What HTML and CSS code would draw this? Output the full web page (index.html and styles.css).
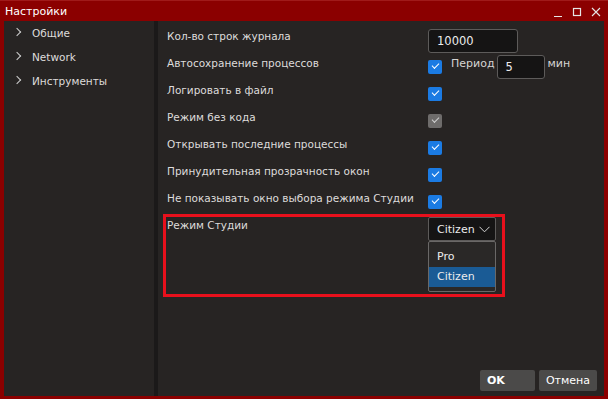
FILE: index.html
```html
<!DOCTYPE html>
<html lang="ru">
<head>
  <meta charset="UTF-8">
  <title>Настройки</title>
  <link rel="stylesheet" href="styles.css">
</head>
<body>
<div class="window">
  <div class="titlebar">
    <span class="title">Настройки</span>
    <div class="title-buttons">
      <svg width="10" height="10" viewBox="0 0 10 10"><path d="M1 9.5H9" stroke="#e6e6e6" stroke-width="1"/></svg>
      <svg width="10" height="10" viewBox="0 0 10 10"><rect x="1.5" y="1.5" width="7" height="7" fill="none" stroke="#e6e6e6" stroke-width="1.2"/></svg>
      <svg width="10" height="10" viewBox="0 0 10 10"><path d="M1 1L9 9M9 1L1 9" stroke="#e6e6e6" stroke-width="1.1"/></svg>
    </div>
  </div>

  <div class="content">
    <div class="sidebar">
      <div class="nav-item"><span class="chevron"></span>Общие</div>
      <div class="nav-item"><span class="chevron"></span>Network</div>
      <div class="nav-item"><span class="chevron"></span>Инструменты</div>
    </div>
    <div class="divider"></div>

    <div class="main">
      <div class="settings">
        <div class="row">
          <span class="label">Кол-во строк журнала</span>
          <div class="field input-wide">10000</div>
        </div>
        <div class="row">
          <span class="label">Автосохранение процессов</span>
          <span class="check"></span>
          <span class="inline-label">Период</span>
          <div class="field input-small">5</div>
          <span class="inline-label unit">мин</span>
        </div>
        <div class="row">
          <span class="label">Логировать в файл</span>
          <span class="check"></span>
        </div>
        <div class="row">
          <span class="label">Режим без кода</span>
          <span class="check disabled"></span>
        </div>
        <div class="row">
          <span class="label">Открывать последние процессы</span>
          <span class="check"></span>
        </div>
        <div class="row">
          <span class="label">Принудительная прозрачность окон</span>
          <span class="check"></span>
        </div>
        <div class="row">
          <span class="label">Не показывать окно выбора режима Студии</span>
          <span class="check"></span>
        </div>
        <div class="row">
          <span class="label">Режим Студии</span>
          <div class="combo-wrap">
            <div class="combo">Citizen
              <svg width="11" height="7" viewBox="0 0 11 7"><path d="M0.5 0.8L5.5 5.8L10.5 0.8" fill="none" stroke="#d8d8d8" stroke-width="1"/></svg>
            </div>
            <div class="popup">
              <div class="option">Pro</div>
              <div class="option selected">Citizen</div>
            </div>
          </div>
        </div>
        <div class="highlight"></div>
      </div>

      <div class="actions">
        <button class="btn ok">OK</button>
        <button class="btn">Отмена</button>
      </div>
    </div>
  </div>
</div>
</body>
</html>
```

FILE: styles.css
```css
body {
  margin: 0;
  padding: 0;
  background-color: #8b0000;
  font-family: 'DejaVu Sans', sans-serif;
  font-size: 10.5px;
  color: #dedcdb;
}

.window {
  width: 608px;
  height: 399px;
  display: flex;
  flex-direction: column;
}

.titlebar {
  height: 21px;
  display: flex;
  align-items: center;
  justify-content: space-between;
  padding: 0 7px 0 5px;
  background-color: #8b0000;
  border-top: 1px solid #a01a1a;
  box-sizing: border-box;
  font-size: 11px;
}

.title {
  color: #ffffff;
}

.title-buttons {
  display: flex;
  gap: 9px;
  align-items: center;
  padding-top: 2px;
}

.content {
  flex: 1;
  display: flex;
  margin: 0 4px 3px 4px;
  background-color: #272423;
  min-height: 0;
}

.sidebar {
  width: 150px;
}

.nav-item {
  height: 24px;
  display: flex;
  align-items: center;
  padding-left: 28px;
  position: relative;
}

.chevron {
  position: absolute;
  left: 10px;
  top: 8px;
  width: 5px;
  height: 5px;
  border-right: 1px solid #cfcfcf;
  border-bottom: 1px solid #cfcfcf;
  transform: rotate(-45deg);
}

.divider {
  width: 4px;
  background-color: #1b1919;
}

.main {
  flex: 1;
  display: flex;
  flex-direction: column;
  padding: 7px 7px 5px 9px;
}

.settings {
  position: relative;
  flex: 1;
}

.row {
  height: 27px;
  display: flex;
  align-items: flex-start;
}

.label {
  width: 261px;
  line-height: 17px;
}

.field {
  background-color: #151414;
  border: 1px solid #5d5b5a;
  border-radius: 3px;
  box-sizing: border-box;
  padding-left: 8px;
  display: flex;
  align-items: center;
  color: #ececec;
  font-size: 11.5px;
}

.input-wide {
  width: 90px;
  height: 24px;
  margin-top: 1px;
}

.input-small {
  width: 48px;
  height: 24px;
  margin-left: 2px;
}

.inline-label {
  line-height: 18px;
  margin-left: 9px;
  color: #d6d4d3;
  font-size: 11px;
}

.unit {
  margin-left: 3px;
}

.check {
  width: 14px;
  height: 14px;
  margin-top: 5px;
  border-radius: 2px;
  background-color: #1b7be3;
  position: relative;
}

.check::after {
  content: "";
  position: absolute;
  left: 4px;
  top: 3px;
  width: 6px;
  height: 3px;
  border-left: 1px solid #ffffff;
  border-bottom: 1px solid #ffffff;
  transform: rotate(-45deg);
}

.check.disabled {
  background-color: #6e6c6b;
}

.check.disabled::after {
  border-color: #d0d0d0;
}

.combo-wrap {
  position: relative;
}

.combo {
  width: 68px;
  height: 24px;
  box-sizing: border-box;
  background-color: #151414;
  border: 1px solid #5d5b5a;
  border-radius: 2px;
  display: flex;
  align-items: center;
  justify-content: space-between;
  padding: 0 5px 0 8px;
  color: #ececec;
  font-size: 11px;
}

.popup {
  position: absolute;
  left: 0;
  top: 24px;
  width: 68px;
  height: 51px;
  box-sizing: border-box;
  background-color: #2a2827;
  border: 1px solid #6a6867;
  border-radius: 2px;
  padding-top: 5px;
}

.option {
  height: 20px;
  line-height: 20px;
  padding-left: 8px;
  color: #ececec;
  font-size: 11px;
}

.option.selected {
  background-color: #1a5b95;
}

.highlight {
  position: absolute;
  left: -4px;
  top: 186px;
  width: 342px;
  height: 83px;
  border: 3px solid #e8101c;
  box-sizing: border-box;
}

.actions {
  display: flex;
  justify-content: flex-end;
  gap: 4px;
}

.btn {
  height: 21px;
  background-color: #4b4a49;
  color: #ffffff;
  border: none;
  border-radius: 2px;
  padding: 0 7px;
  font-family: 'DejaVu Sans', sans-serif;
  font-size: 11px;
  text-align: left;
  cursor: pointer;
}

.btn.ok {
  width: 55px;
  font-weight: bold;
}
```
